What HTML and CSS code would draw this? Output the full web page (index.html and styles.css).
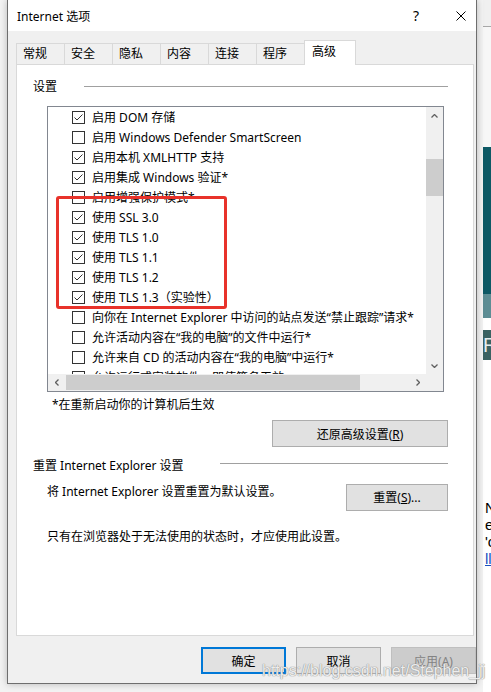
FILE: index.html
```html
<!DOCTYPE html>
<html lang="zh-CN">
<head>
    <meta charset="UTF-8">
    <title>Internet 选项</title>
    <link rel="stylesheet" href="styles.css">
</head>
<body>
    <div class="screen">
        <div class="window">
            <div class="titlebar">
                <span>Internet 选项</span>
                <span class="help">?</span>
                <svg class="close" width="10" height="10" viewBox="0 0 10 10"><path d="M0.5 0.5 L9.5 9.5 M9.5 0.5 L0.5 9.5" stroke="#000" stroke-width="1" fill="none"/></svg>
            </div>
            <div class="body">
                <div class="tabs">
                    <div class="tab">常规</div>
                    <div class="tab">安全</div>
                    <div class="tab">隐私</div>
                    <div class="tab">内容</div>
                    <div class="tab">连接</div>
                    <div class="tab">程序</div>
                    <div class="tab active">高级</div>
                </div>
                <div class="panel">
                    <div class="group">
                        <span class="group-label">设置</span>
                        <span class="group-line"></span>
                    </div>
                    <div class="listbox">
                        <div class="rows">
                            <div class="row"><span class="box checked"></span>启用 DOM 存储</div>
                            <div class="row"><span class="box"></span>启用 Windows Defender SmartScreen</div>
                            <div class="row"><span class="box checked"></span>启用本机 XMLHTTP 支持</div>
                            <div class="row"><span class="box checked"></span>启用集成 Windows 验证*</div>
                            <div class="row"><span class="box"></span>启用增强保护模式*</div>
                            <div class="row"><span class="box checked"></span>使用 SSL 3.0</div>
                            <div class="row"><span class="box checked"></span>使用 TLS 1.0</div>
                            <div class="row"><span class="box checked"></span>使用 TLS 1.1</div>
                            <div class="row"><span class="box checked"></span>使用 TLS 1.2</div>
                            <div class="row"><span class="box checked"></span>使用 TLS 1.3（实验性）</div>
                            <div class="row"><span class="box"></span>向你在 Internet Explorer 中访问的站点发送“禁止跟踪”请求*</div>
                            <div class="row"><span class="box"></span>允许活动内容在“我的电脑”的文件中运行*</div>
                            <div class="row"><span class="box"></span>允许来自 CD 的活动内容在“我的电脑”中运行*</div>
                            <div class="row"><span class="box"></span>允许运行或安装软件，即使签名无效</div>
                        </div>
                        <div class="vscroll">
                            <span class="arrow"><svg width="7" height="4" viewBox="0 0 7 4"><polyline points="0.5,3.5 3.5,0.5 6.5,3.5" fill="none" stroke="#606060" stroke-width="1.3"/></svg></span>
                            <span class="vthumb"></span>
                            <span class="arrow down"><svg width="7" height="4" viewBox="0 0 7 4"><polyline points="0.5,0.5 3.5,3.5 6.5,0.5" fill="none" stroke="#606060" stroke-width="1.3"/></svg></span>
                        </div>
                        <div class="hscroll">
                            <span class="arrow"><svg width="4" height="7" viewBox="0 0 4 7"><polyline points="3.5,0.5 0.5,3.5 3.5,6.5" fill="none" stroke="#606060" stroke-width="1.3"/></svg></span>
                            <span class="hthumb"></span>
                            <span class="arrow right"><svg width="4" height="7" viewBox="0 0 4 7"><polyline points="0.5,0.5 3.5,3.5 0.5,6.5" fill="none" stroke="#606060" stroke-width="1.3"/></svg></span>
                        </div>
                        <div class="corner"></div>
                        <div class="mark"></div>
                    </div>
                    <p class="note">*在重新启动你的计算机后生效</p>
                    <div class="actions">
                        <button class="btn btn-wide">还原高级设置(<u>R</u>)</button>
                    </div>
                    <div class="group group-reset">
                        <span class="group-label">重置 Internet Explorer 设置</span>
                        <span class="group-line"></span>
                    </div>
                    <div class="reset-row">
                        <span>将 Internet Explorer 设置重置为默认设置。</span>
                        <button class="btn btn-reset">重置(<u>S</u>)...</button>
                    </div>
                    <p class="hint">只有在浏览器处于无法使用的状态时，才应使用此设置。</p>
                </div>
                <div class="footer">
                    <button class="btn btn-ok">确定</button>
                    <button class="btn">取消</button>
                    <button class="btn btn-disabled">应用(<u>A</u>)</button>
                </div>
            </div>
            <div class="watermark">https://blog.csdn.net/Stephen_jj</div>
        </div>
        <div class="backdrop">
            <div class="bd-top"></div>
            <div class="bd-light"></div>
            <div class="bd-teal"></div>
            <div class="bd-teal2"></div>
            <div class="bd-gap"></div>
            <div class="bd-badge">R</div>
            <div class="bd-gap2"></div>
            <div class="bd-text">N<br>e<br>'c<br><span>ll</span></div>
        </div>
    </div>
</body>
</html>
```

FILE: styles.css
```css
body {
    margin: 0;
    width: 491px;
    height: 692px;
    overflow: hidden;
    background: #f3f3f3;
    font-family: "Noto Sans", "Noto Sans CJK SC", sans-serif;
    font-size: 12px;
    color: #000;
}
.screen {
    display: flex;
    height: 692px;
    padding-left: 7px;
}
.window {
    position: relative;
    width: 470px;
    height: 684px;
    flex: none;
    box-sizing: border-box;
    border: 1px solid #6e6e6e;
    border-top: none;
    background: #f0f0f0;
    display: flex;
    flex-direction: column;
    box-shadow: 0 0 7px rgba(0, 0, 0, 0.25);
}
.titlebar {
    height: 31px;
    flex: none;
    background: #fff;
    display: flex;
    align-items: center;
    padding-left: 9px;
}
.help {
    margin-left: auto;
    margin-right: 37px;
    font-size: 14px;
}
.close {
    margin-right: 10px;
}
.body {
    flex: 1;
    padding: 9px 0 0 8px;
    display: flex;
    flex-direction: column;
}
.tabs {
    display: flex;
    align-items: flex-end;
    height: 24px;
    position: relative;
    z-index: 1;
}
.tab {
    width: 49px;
    height: 21px;
    box-sizing: border-box;
    border: 1px solid #d9d9d9;
    border-bottom: none;
    margin-right: -1px;
    padding-left: 6px;
    line-height: 19px;
    background: #f0f0f0;
}
.tab.active {
    width: 52px;
    height: 25px;
    margin-bottom: -1px;
    padding-left: 7px;
    line-height: 21px;
    background: #fff;
}
.panel {
    width: 458px;
    height: 572px;
    flex: none;
    box-sizing: border-box;
    border: 1px solid #d9d9d9;
    background: #fff;
    padding: 0 25px 0 16px;
}
.group {
    display: flex;
    height: 16px;
    line-height: 16px;
    margin-top: 14px;
}
.group-label {
    width: 51px;
    flex: none;
}
.group-line {
    flex: 1;
    height: 1px;
    margin-top: 7px;
    background: #a0a0a0;
}
.group-reset {
    margin-top: 11px;
}
.group-reset .group-label {
    width: 187px;
}
.group-reset .group-line {
    margin-top: 5px;
}
.listbox {
    position: relative;
    margin: 11px 0 0 14px;
    width: 397px;
    height: 286px;
    box-sizing: border-box;
    border: 1px solid #828790;
    display: grid;
    grid-template-columns: 1fr 17px;
    grid-template-rows: 1fr 17px;
}
.rows {
    overflow: hidden;
}
.row {
    height: 20px;
    display: flex;
    align-items: center;
    padding-left: 24px;
    white-space: nowrap;
}
.box {
    width: 13px;
    height: 13px;
    flex: none;
    box-sizing: border-box;
    border: 1px solid #333;
    margin-right: 7px;
    background: #fff;
}
.box.checked {
    background: #fff url("data:image/svg+xml,%3Csvg xmlns='http://www.w3.org/2000/svg' width='11' height='11'%3E%3Cpath d='M1.5 5.5 L4 8 L9.5 2.5' fill='none' stroke='%23333' stroke-width='1'/%3E%3C/svg%3E") no-repeat center;
}
.vscroll {
    background: #f0f0f0;
    display: flex;
    flex-direction: column;
}
.hscroll {
    background: #f0f0f0;
    display: flex;
    align-items: center;
}
.corner {
    background: #f0f0f0;
}
.arrow {
    width: 17px;
    height: 17px;
    flex: none;
    display: flex;
    align-items: center;
    justify-content: center;
}
.arrow.down {
    margin-top: auto;
}
.arrow.right {
    margin-left: auto;
}
.vthumb {
    height: 37px;
    margin-top: 35px;
    background: #cdcdcd;
}
.hthumb {
    width: 294px;
    height: 15px;
    margin-left: 1px;
    background: #cdcdcd;
}
.mark {
    position: absolute;
    left: 8px;
    top: 89px;
    width: 171px;
    height: 113px;
    box-sizing: border-box;
    border: 3px solid #e8322a;
    border-radius: 3px;
}
.note {
    margin: 5px 0 0 19px;
    line-height: 16px;
}
.actions {
    display: flex;
    justify-content: flex-end;
    margin-top: 7px;
}
.btn {
    height: 27px;
    box-sizing: border-box;
    border: 1px solid #adadad;
    background: #e1e1e1;
    font: inherit;
    color: #000;
    padding: 0;
}
.btn-wide {
    width: 176px;
}
.reset-row {
    display: flex;
    justify-content: space-between;
    margin-top: 10px;
    padding-left: 14px;
    line-height: 16px;
}
.btn-reset {
    width: 102px;
}
.hint {
    margin: 18px 0 0 14px;
    line-height: 16px;
}
.footer {
    display: flex;
    justify-content: flex-end;
    gap: 10px;
    margin-top: 11px;
}
.footer .btn {
    width: 85px;
}
.footer .btn-ok {
    border: 2px solid #0078d7;
}
.footer .btn-disabled {
    background: #cccccc;
    border-color: #bfbfbf;
    color: #838383;
}
.watermark {
    position: absolute;
    left: 254px;
    top: 662px;
    font-family: "Liberation Sans", sans-serif;
    font-size: 16px;
    line-height: 18px;
    color: rgba(255, 255, 255, 0.85);
    text-shadow: 0 0 1px #8a8a8a, 0 0 1px #8a8a8a;
    white-space: nowrap;
}
.backdrop {
    flex: 1;
    display: flex;
    flex-direction: column;
    padding-left: 6px;
    overflow: hidden;
}
.bd-top {
    height: 27px;
    border-bottom: 1px solid #a8a8a8;
    background: #f0f0f0;
}
.bd-light {
    height: 124px;
    background: #f7f7f7;
}
.bd-teal {
    height: 153px;
    background: #0d5965;
}
.bd-teal2 {
    height: 25px;
    background: #5d8d94;
}
.bd-gap {
    height: 12px;
    background: #fff;
}
.bd-badge {
    height: 30px;
    background: #3a6262;
    color: #e6eeee;
    font-family: "Liberation Sans", sans-serif;
    font-size: 20px;
    line-height: 30px;
}
.bd-gap2 {
    height: 145px;
    background: #fff;
}
.bd-text {
    background: #fff;
    font-family: "Liberation Sans", sans-serif;
    font-size: 15px;
    line-height: 17px;
    padding-left: 2px;
    height: 200px;
}
.bd-text span {
    color: #1a4fbf;
    text-decoration: underline;
}
```
